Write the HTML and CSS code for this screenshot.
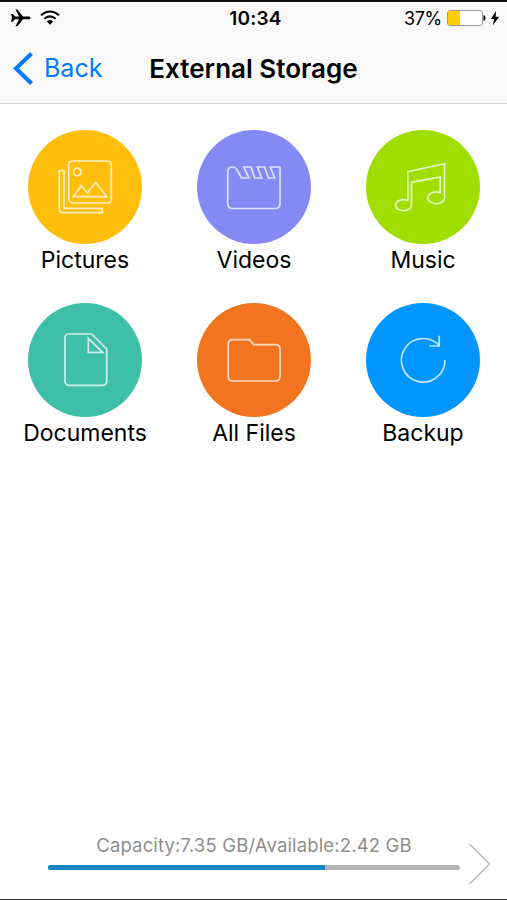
FILE: index.html
```html
<!DOCTYPE html>
<html lang="en">
<head>
    <meta charset="UTF-8">
    <meta name="viewport" content="width=device-width, initial-scale=1.0">
    <title>External Storage</title>
    <link rel="stylesheet" href="styles.css">
</head>
<body>
    <header class="header">
        <div class="status">
            <div class="status-left">
                <svg width="20" height="18" viewBox="0 0 20 18"><path d="M0 5h1.800l2.200 2.600h4.200L4.400 .5h2l5.600 7.100h5.400c2.800 0 2.800 2.600 0 2.600H12L6.400 17.300h-2L8.200 10.200H4L1.800 12.800H0l1-4z"/></svg>
                <svg width="20" height="18" viewBox="0 0 20 18"><g fill="none" stroke="#000" stroke-width="2"><path d="M1 6.200q9-7.400 18 0"/><path d="M4.300 9.700q5.700-4.600 11.400 0"/></g><path d="M6.800 12.400q3.200-2.600 6.400 0L10 15.800z"/></svg>
            </div>
            <div class="time">10:34</div>
            <div class="status-right">
                <span class="percent">37%</span>
                <svg width="54" height="18" viewBox="0 0 54 18"><rect x="1.500" y="1.500" width="35" height="15" rx="2.500" fill="#fff" stroke="#999"/><path fill="#fc0" d="M3.500 2H14v14H3.500Q2 16 2 14.500v-11Q2 2 3.500 2z"/><path d="M37.500 6q2 .5 2 3t-2 3z"/><path d="M50 2 45 10h3.200l-1.400 6.500L53.200 7.800h-3.500z"/></svg>
            </div>
        </div>
        <div class="nav">
            <a class="back"><svg width="20" height="33" viewBox="0 0 20 33"><path d="M18.500 1.500 3 16.500l15.500 15" fill="none" stroke="#007aff" stroke-width="4"/></svg><span>Back</span></a>
            <h1 class="title">External Storage</h1>
        </div>
    </header>

    <main class="grid">
        <div class="item">
            <div class="circle pictures">
                <svg class="icon" viewBox="0 0 114 114"><rect x="40.700" y="31" width="42.600" height="42" rx="4"/><path d="M31.300 40.700H36v37.600h38.300v4.400H35.300q-4 0-4-4z"/><circle cx="49.300" cy="42" r="3.800"/><path d="m45.300 66.700 8-11 6 7.300 8.400-10.700 11 14.400z"/></svg>
            </div>
            <span class="label">Pictures</span>
        </div>
        <div class="item">
            <div class="circle videos">
                <svg class="icon" viewBox="0 0 114 114"><path d="M30.700 42q0-5 5-5 3 0 4.300 3l4.500 8H52l-5.300-11H54l3.700 11h7L60.300 37h7.200l4 11h6.200L73.300 37H83v36.500q0 5-5 5H35.700q-5 0-5-5z"/></svg>
            </div>
            <span class="label">Videos</span>
        </div>
        <div class="item">
            <div class="circle music">
                <svg class="icon" viewBox="0 0 114 114"><path d="M41.800 70.500V41.700l36.700-8v34a8.400 5.800 0 1 1-4.300-5V47l-28.700 5.300V75.500a8 5.500 0 1 1-3.700-5z"/></svg>
            </div>
            <span class="label">Music</span>
        </div>
        <div class="item">
            <div class="circle documents">
                <svg class="icon" viewBox="0 0 114 114"><path d="M41 31h22.700l15 15v31.800q0 4.500-4.500 4.500H41.500Q37 82.300 37 77.800V35q0-4 4-4z"/><path d="M60.300 35.300v14h14.400z"/></svg>
            </div>
            <span class="label">Documents</span>
        </div>
        <div class="item">
            <div class="circle files">
                <svg class="icon" viewBox="0 0 114 114"><path d="M36 36.700h16.300l4.700 5h21.300q4.700 0 4.700 4.600v27.200q0 4.500-4.700 4.500H36q-4.700 0-4.700-4.500V41.300q0-4.600 4.700-4.600z"/></svg>
            </div>
            <span class="label">All Files</span>
        </div>
        <div class="item">
            <div class="circle backup">
                <svg class="icon" viewBox="0 0 114 114"><path d="M79 57A21.800 21.800 0 1 1 73.200 42.500"/><path d="M73.200 32.700V43h-10"/></svg>
            </div>
            <span class="label">Backup</span>
        </div>
    </main>

    <footer class="footer">
        <div class="storage">
            <div class="capacity">Capacity:7.35 GB/Available:2.42 GB</div>
            <div class="bar"><div class="used" style="width: 67.3%"></div></div>
        </div>
        <svg class="more" width="24" height="44" viewBox="0 0 24 44"><path d="M1.500 2 21.500 22l-20 20" fill="none" stroke="#bbb" stroke-width="1.500"/></svg>
    </footer>
</body>
</html>
```

FILE: styles.css
```css
* { box-sizing: border-box; }
body { margin: 0; height: 900px; display: flex; flex-direction: column; background: #fff; color: #000; font-family: Inter, "Liberation Sans", sans-serif; border-top: 2px solid #111; border-bottom: 1px solid #333; }
svg { display: block; }

.header { height: 102px; background: #f9f9f9; border-bottom: 1px solid #d8d8d8; }
.status { height: 32px; display: grid; grid-template-columns: 1fr auto 1fr; align-items: center; padding: 0 7px 0 11px; }
.status-left { display: flex; gap: 9px; }
.status-right { display: flex; justify-content: flex-end; align-items: center; gap: 4px; }
.time { font-size: 19px; font-weight: 600; letter-spacing: 0.2px; }
.percent { font-size: 18px; letter-spacing: -0.3px; }
.nav { height: 68px; display: grid; grid-template-columns: 1fr auto 1fr; align-items: center; padding: 0 13px; }
.back { display: flex; align-items: center; gap: 11px; color: #007aff; font-size: 25px; }
.title { margin: 0; font-size: 26px; font-weight: 600; white-space: nowrap; }

.grid { display: grid; grid-template-columns: repeat(3, 169px); grid-auto-rows: 173px; justify-content: center; padding: 26px 0 0 1px; }
.item { display: flex; flex-direction: column; align-items: center; }
.circle { width: 114px; height: 114px; border-radius: 50%; }
.icon { width: 114px; height: 114px; fill: none; stroke: rgba(255, 255, 255, 0.75); stroke-width: 1.7; }
.label { font-size: 23px; line-height: 33px; white-space: nowrap; }
.pictures { background: #ffbe0b; }
.videos { background: #8589f4; }
.music { background: #9fde00; }
.documents { background: #40bfa8; }
.files { background: #f27420; }
.backup { background: #0095ff; }

.footer { margin-top: auto; height: 68px; display: flex; padding-left: 48px; }
.storage { width: 412px; }
.capacity { height: 34px; line-height: 29px; font-size: 18.5px; letter-spacing: 0.15px; color: #8e8e8e; text-align: center; white-space: nowrap; }
.bar { height: 5px; border-radius: 3px; background: #b4b4b4; overflow: hidden; }
.used { height: 5px; background: #1786c2; }
.more { margin: 11px 0 0 8px; }
```
